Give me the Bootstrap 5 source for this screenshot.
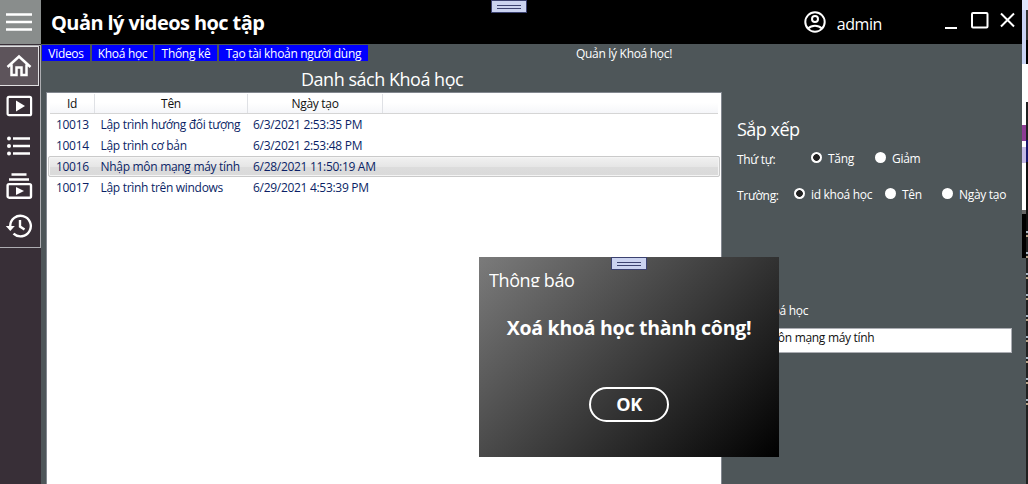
<!DOCTYPE html>
<html lang="vi">
<head>
<meta charset="utf-8">
<meta name="viewport" content="width=device-width, initial-scale=1">
<title>Quản lý videos học tập</title>
<link href="https://cdn.jsdelivr.net/npm/bootstrap@5.3.0/dist/css/bootstrap.min.css" rel="stylesheet">
<style>
body{font-family:"Open Sans","Noto Sans",sans-serif;font-size:12px;line-height:16px;letter-spacing:-.3px;background:#202020;color:#fff}
svg{display:block;fill:none;stroke:#fff}
.frame{width:1028px;height:484px}
.side{width:41px;background:#382f37}
.burger{height:44px;background:#898d8c;padding:12px 6px}
.menu{margin-top:1px;height:203px;border:1px solid #adadb1;border-left:0}
.menu a{height:40px;width:40px;padding:0 0 0 5px;display:flex;align-items:center}
.menu a.active{width:39px;background:#5d545b;border:1px solid #e0dfe1;border-left:0}
.topbar{height:44px;background:#000;width:981px}
.topbar h1{font-size:20px;line-height:24px;font-weight:700;letter-spacing:-.58px;margin:11px 0 0 10px}
.user{font-size:16px;line-height:22px;letter-spacing:-.4px;margin:13px 62px 0 2px}
.page{width:985px;background:#4e5659}
.tabs{height:20px;padding:1px 0 0 1px;gap:2px;margin-left:-5px}
.tabs a{height:16px;line-height:18px;background:#00f;color:#fff;text-decoration:none;text-align:center}
.crumb{margin:1px 0 0 206px}
.listcol{width:681px;padding-left:5px}
.listcol h2{font-size:18px;line-height:24px;letter-spacing:-.48px;margin:3px 0 1px 255px;height:24px;font-weight:400}
.grid{height:392px;width:676px;background:#fff;border:1px solid #82878f;border-bottom:0;padding:1px;color:#0b1f66}
.grid .hd{height:20px;margin:0 2px;color:#111;background:linear-gradient(#fff 45%,#f5f6f9);border-bottom:1px solid #d5d5d5;line-height:20px;text-align:center}
.hd>div{border-right:1px solid #dfe1e5}
.c1{width:45px}.c2{width:153px}.c3{width:135px}
.line{height:21px;line-height:20px;border:1px solid transparent;border-radius:2px;padding-left:1px}
.line.sel{background:linear-gradient(#f1f1f1,#e6e6e6 50%,#dcdcdc 51%,#dadada);border-color:#cacaca;box-shadow:inset 0 0 0 1px #f4f4f4}
.line .c1{padding-left:6px}.line .c2{padding-left:5.500px}.line .c3{padding-left:5px}
.sortbox{padding:73px 0 0 15px;width:304px}
.sortbox h2{font-size:18px;line-height:24px;font-weight:400;letter-spacing:-.5px;margin:0 0 9px}
.opt{display:flex;align-items:center;gap:6px;height:16px;white-space:nowrap}
.opt i{width:11px;height:11px;border-radius:50%;background:#fff;display:block;margin-top:-1px}
.opt.on i{background:radial-gradient(circle,#222 0 3px,#fff 3.7px)}
.opt span{padding-top:1px}
.namebox{width:280px;height:25px;margin:9px 0 0 -5px;border:1px solid #abadb3;background:#fff;color:#111;padding:1px 2px}
.edge{top:0;right:0;width:6px;height:258px;background:linear-gradient(#dfe5fb 0 10px,#c9d3f3 10px 64px,#fff 64px 125px,#8e3d94 125px 141px,#fff 141px 147px,#c3b9e5 147px 163px,#fff 163px 210px,#666 210px 214px,#000 214px)}
.edge::after{content:"";position:absolute;right:0;top:10px;width:2px;height:248px;background:linear-gradient(#333 30px,#000 30px 54px,#fff 54px 92px,#222 92px 130px,#17176b 130px 152px,#111 152px)}
.scraps{top:231px;right:0;width:2px;height:174px;background:repeating-linear-gradient(#a9b7c4 0 2px,#202020 2px 4px,#b9a58a 4px 6px,#202020 6px 21px)}
.grip{width:36px;height:13px;background:#cbd3f0;border:1px solid #3c4270;padding:4px 5px}
.grip::before{content:"";display:block;height:4px;border:solid #3c4270;border-width:1px 0}
.dialog{left:479px;top:257px;width:300px;height:200px;background:linear-gradient(135deg,#7b7b7b,#000)}
.dialog .cap{font-size:18px;line-height:24px;height:19px;overflow:hidden;letter-spacing:-.4px;margin:11px 0 0 10px}
.dialog .msg{font-size:19.500px;line-height:24px;font-weight:700;letter-spacing:-.27px;margin-top:29px;text-align:center;white-space:nowrap}
.okbtn{width:80px;height:35px;border:2px solid #fff;border-radius:18px;color:#fff;background:transparent;font-weight:700;font-size:18px;line-height:24px;letter-spacing:-.5px;margin:47px auto 0;display:block;padding:0 0 1px}
</style>
</head>
<body class="overflow-hidden">
<div class="frame position-relative d-flex overflow-hidden">
  <aside class="side flex-shrink-0">
    <div class="burger"><svg width="26" height="20" stroke-width="2.6"><path d="M0 2.500h26M0 10h26M0 17.500h26"/></svg></div>
    <nav class="menu">
      <a class="active" href="#"><svg width="28" height="28" viewBox="0 0 28 28" stroke-width="2.5"><path d="M2.500 15 14 4.500l11.500 10.500M6.500 12.500v10.500h5v-7.500h5v7.500h5v-10.500"/></svg></a>
      <a href="#"><svg width="28" height="28" viewBox="0 0 28 28" stroke-width="2.2"><rect x="2.600" y="4.900" width="23.500" height="18.300" rx="1.500"/><path d="M11 8.500v11l9-5.500z" fill="#fff" stroke="none"/></svg></a>
      <a href="#"><svg width="28" height="28" viewBox="0 0 28 28" stroke-width="2.4"><path d="M8 6.500h17M8 14h17M8 21.500h17"/><g fill="#fff" stroke="none"><circle cx="4" cy="6.500" r="2"/><circle cx="4" cy="14" r="2"/><circle cx="4" cy="21.500" r="2"/></g></svg></a>
      <a href="#"><svg width="28" height="28" viewBox="0 0 28 28" stroke-width="2.4"><path d="M6.500 2.500h15M4 7.500h20"/><rect x="2.600" y="12.100" width="23.400" height="13.600" rx="1.500"/><path d="M11 15v8l8-4z" fill="#fff" stroke="none"/></svg></a>
      <a href="#"><svg width="28" height="28" viewBox="0 0 28 28" stroke-width="2.4"><path d="M5.200 14a10.300 10.300 0 1 1 3.300 7.600M15 8v6.500l4.500 3"/><path d="M.8 14h9l-4.500 5z" fill="#fff" stroke="none"/></svg></a>
    </nav>
  </aside>
  <div class="d-flex flex-column flex-shrink-0">
    <header class="topbar d-flex">
      <h1>Quản lý videos học tập</h1>
      <div class="d-flex ms-auto">
        <svg class="me-2" style="margin-top:10px" width="24" height="24" viewBox="0 0 24 24" stroke-width="2"><circle cx="12" cy="12" r="9.700"/><circle cx="12" cy="9" r="3"/><path d="M5 18.500c3.800-3.800 10.200-3.800 14 0"/></svg>
        <span class="user">admin</span>
        <svg width="78" height="32" viewBox="0 0 78 32" stroke-width="2"><path d="M1 28h12M57 13.500l13 13M70 13.500l-13 13"/><rect x="28" y="13" width="15.500" height="14.500" rx="1"/></svg>
      </div>
    </header>
    <main class="page d-flex flex-grow-1">
      <section class="listcol flex-shrink-0">
        <nav class="tabs d-flex">
          <a href="#" style="width:48px">Videos</a><a href="#" style="width:61px">Khoá học</a><a href="#" style="width:62px">Thống kê</a><a href="#" style="width:149px">Tạo tài khoản người dùng</a>
          <span class="crumb">Quản lý Khoá học!</span>
        </nav>
        <h2>Danh sách Khoá học</h2>
        <div class="grid">
          <div class="hd d-flex"><div class="c1">Id</div><div class="c2">Tên</div><div class="c3">Ngày tạo</div></div>
          <div class="line d-flex"><div class="c1">10013</div><div class="c2">Lập trình hướng đối tượng</div><div class="c3">6/3/2021 2:53:35 PM</div></div>
          <div class="line d-flex"><div class="c1">10014</div><div class="c2">Lập trình cơ bản</div><div class="c3">6/3/2021 2:53:48 PM</div></div>
          <div class="line sel d-flex"><div class="c1">10016</div><div class="c2">Nhập môn mạng máy tính</div><div class="c3">6/28/2021 11:50:19 AM</div></div>
          <div class="line d-flex"><div class="c1">10017</div><div class="c2">Lập trình trên windows</div><div class="c3">6/29/2021 4:53:39 PM</div></div>
        </div>
      </section>
      <section class="sortbox">
        <h2>Sắp xếp</h2>
        <div class="d-flex"><span style="width:74px;padding-top:2px">Thứ tự:</span><label class="opt on" style="width:64px"><i></i><span>Tăng</span></label><label class="opt"><i></i><span>Giảm</span></label></div>
        <div class="d-flex" style="margin-top:18px"><span style="width:57px;padding-top:2px">Trường:</span><label class="opt on" style="width:91px"><i></i><span>id khoá học</span></label><label class="opt" style="width:57px"><i></i><span>Tên</span></label><label class="opt"><i></i><span>Ngày tạo</span></label></div>
        <div style="margin-top:99px">Tên khoá học</div>
        <div class="namebox">Nhập môn mạng máy tính</div>
      </section>
    </main>
  </div>
  <div class="edge position-absolute"></div>
  <div class="scraps position-absolute"></div>
  <div class="grip position-absolute" style="left:491px;top:0"></div>
  <div class="dialog position-absolute d-flex flex-column">
    <div class="grip position-absolute" style="left:132px;top:0"></div>
    <div class="cap">Thông báo</div>
    <div class="msg">Xoá khoá học thành công!</div>
    <button class="okbtn" type="button">OK</button>
  </div>
</div>
<script src="https://cdn.jsdelivr.net/npm/bootstrap@5.3.0/dist/js/bootstrap.bundle.min.js"></script>
</body>
</html>
